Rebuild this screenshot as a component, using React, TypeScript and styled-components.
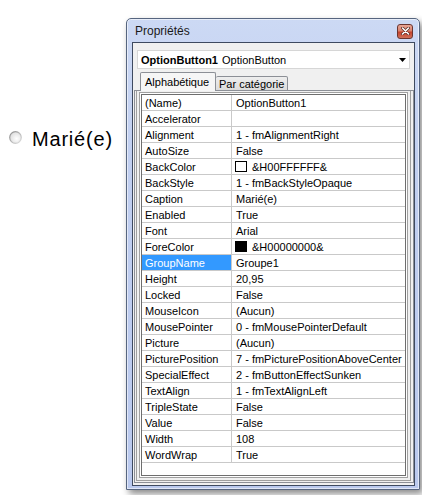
import React from "react";
import styled, { createGlobalStyle } from "styled-components";

const Global = createGlobalStyle`
  html, body { margin: 0; padding: 0; background: #ffffff; }
  body { font-family: "Liberation Sans", Arial, sans-serif; }
`;

const Page = styled.div`
  display: flex;
  align-items: flex-start;
  width: 422px;
  height: 495px;
  box-sizing: border-box;
  padding: 18px 0 0 9px;
`;

const OptionControl = styled.div`
  display: flex;
  align-items: flex-start;
  gap: 10px;
  width: 117px;
  margin-top: 110px;
`;

const RadioIcon = styled.svg`
  flex: none;
  margin-top: 3px;
`;

const OptionLabel = styled.span`
  font-family: "Liberation Sans", Arial, sans-serif;
  font-size: 20px;
  line-height: 23px;
  letter-spacing: 0.8px;
  color: #000;
  white-space: nowrap;
`;

const Window = styled.div`
  width: 294px;
  height: 472px;
  box-sizing: border-box;
  display: flex;
  flex-direction: column;
  border: 1px solid #56657f;
  border-radius: 5px 5px 0 0;
  padding: 0 4px 3px 5px;
  background: linear-gradient(180deg, #ccd9f4 0%, #c1cff0 30%, #bac9ee 100%);
  box-shadow: inset 0 0 0 1px rgba(255, 255, 255, 0.55), 3px 4px 7px rgba(0, 0, 0, 0.45);
`;

const TitleBar = styled.div`
  height: 23px;
  flex: none;
  display: flex;
  align-items: center;
  justify-content: space-between;
  padding-left: 3px;
`;

const TitleText = styled.span`
  font-family: "Liberation Sans", Arial, sans-serif;
  font-size: 12px;
  color: #1a1a1a;
`;

const CloseButton = styled.div`
  width: 16px;
  height: 15px;
  box-sizing: border-box;
  margin-right: 2px;
  margin-top: 1px;
  border: 1px solid #6b3530;
  border-radius: 3px;
  background: linear-gradient(180deg, #e7a595 0%, #d9826d 45%, #c5422b 55%, #d0705a 100%);
  display: flex;
  align-items: center;
  justify-content: center;
`;

const Client = styled.div`
  flex: 1;
  display: flex;
  flex-direction: column;
  min-height: 0;
  border: 1px solid #3e4a60;
  background: #f0f0f0;
  padding: 7px 0 2px 0;
`;

const ObjectSelect = styled.div`
  height: 19px;
  flex: none;
  box-sizing: border-box;
  margin: 0 4px;
  border: 1px solid #d6d6d6;
  background: #ffffff;
  display: flex;
  align-items: center;
  padding-left: 3px;
  font-family: "Liberation Sans", Arial, sans-serif;
  font-size: 11px;
  color: #000;
`;

const ObjName = styled.b`
  font-weight: bold;
  margin-right: 4px;
`;

const ObjType = styled.span`
  flex: 1;
`;

const Arrow = styled.svg`
  margin-right: 3px;
`;

const TabStrip = styled.div`
  flex: none;
  height: 19px;
  margin-top: 3px;
  margin-bottom: -1px;
  padding-left: 7px;
  display: flex;
  align-items: flex-end;
  position: relative;
  z-index: 1;
`;

const Tab = styled.div<{ $active?: boolean }>`
  box-sizing: border-box;
  height: ${(p) => (p.$active ? "19px" : "15px")};
  width: ${(p) => (p.$active ? "76px" : "72px")};
  border: 1px solid #8c8f96;
  border-left: ${(p) => (p.$active ? "1px solid #8c8f96" : "none")};
  border-bottom: ${(p) => (p.$active ? "none" : "1px solid #8c8f96")};
  border-radius: 2px 2px 0 0;
  background: ${(p) => (p.$active ? "#f6f6f6" : "linear-gradient(180deg, #eeeeee 0%, #dcdcdc 100%)")};
  padding-left: ${(p) => (p.$active ? "4px" : "3px")};
  line-height: ${(p) => (p.$active ? "18px" : "14px")};
  font-family: "Liberation Sans", Arial, sans-serif;
  font-size: 11px;
  color: #000;
  white-space: nowrap;
`;

const Panel = styled.div`
  flex: 1;
  min-height: 0;
  margin-left: 1px;
  border: 1px solid #8c8f96;
  background: #f0f0f0;
  display: flex;
  flex-direction: column;
  overflow: hidden;
`;

const Grid = styled.div`
  flex: 1;
  min-height: 0;
  margin: 3px 7px 6px 6px;
  border: 1px solid #6e6e6e;
  background: #ffffff;
  box-shadow: 0 0 0 1px #ffffff, 0 0 0 2px #a0a0a0, 0 0 0 4px #f0f0f0, 0 0 0 5px #a0a0a0;
  display: flex;
  flex-direction: column;
`;

const Row = styled.div`
  display: flex;
  height: 16px;
  box-sizing: border-box;
  border-bottom: 1px solid #c9c9c9;
  font-family: "Liberation Sans", Arial, sans-serif;
  font-size: 11px;
  color: #000;
`;

const NameCell = styled.div<{ $selected?: boolean }>`
  width: 90px;
  flex: none;
  box-sizing: border-box;
  border-right: 1px solid #c9c9c9;
  padding: 1px 0 0 3px;
  line-height: 14px;
  white-space: nowrap;
  overflow: hidden;
  background: ${(p) => (p.$selected ? "#3399ff" : "transparent")};
  color: ${(p) => (p.$selected ? "#ffffff" : "#000000")};
`;

const ValueCell = styled.div`
  flex: 1;
  display: flex;
  align-items: center;
  padding: 1px 0 0 4px;
  line-height: 14px;
  white-space: nowrap;
  overflow: hidden;
`;

const Swatch = styled.span<{ $color: string }>`
  width: 12px;
  height: 11px;
  box-sizing: border-box;
  margin: -1px 5px 0 -1px;
  border: 1px solid #000;
  background: ${(p) => p.$color};
  flex: none;
`;

type Prop = { name: string; value: string; swatch?: string; selected?: boolean };

const props: Prop[] = [
  { name: "(Name)", value: "OptionButton1" },
  { name: "Accelerator", value: "" },
  { name: "Alignment", value: "1 - fmAlignmentRight" },
  { name: "AutoSize", value: "False" },
  { name: "BackColor", value: "&H00FFFFFF&", swatch: "#ffffff" },
  { name: "BackStyle", value: "1 - fmBackStyleOpaque" },
  { name: "Caption", value: "Marié(e)" },
  { name: "Enabled", value: "True" },
  { name: "Font", value: "Arial" },
  { name: "ForeColor", value: "&H00000000&", swatch: "#000000" },
  { name: "GroupName", value: "Groupe1", selected: true },
  { name: "Height", value: "20,95" },
  { name: "Locked", value: "False" },
  { name: "MouseIcon", value: "(Aucun)" },
  { name: "MousePointer", value: "0 - fmMousePointerDefault" },
  { name: "Picture", value: "(Aucun)" },
  { name: "PicturePosition", value: "7 - fmPicturePositionAboveCenter" },
  { name: "SpecialEffect", value: "2 - fmButtonEffectSunken" },
  { name: "TextAlign", value: "1 - fmTextAlignLeft" },
  { name: "TripleState", value: "False" },
  { name: "Value", value: "False" },
  { name: "Width", value: "108" },
  { name: "WordWrap", value: "True" },
];

export default function App() {
  return (
    <>
      <Global />
      <Page>
        <OptionControl>
          <RadioIcon width="13" height="13" viewBox="0 0 13 13">
            <defs>
              <linearGradient id="ring" x1="0" y1="0" x2="1" y2="1">
                <stop offset="0" stopColor="#8a8a8a" />
                <stop offset="1" stopColor="#e2e2e2" />
              </linearGradient>
              <radialGradient id="fill" cx="0.6" cy="0.6" r="0.6">
                <stop offset="0" stopColor="#ffffff" />
                <stop offset="1" stopColor="#dedede" />
              </radialGradient>
            </defs>
            <circle cx="6.5" cy="6.5" r="5.8" fill="url(#fill)" stroke="url(#ring)" strokeWidth="1.2" />
          </RadioIcon>
          <OptionLabel>Marié(e)</OptionLabel>
        </OptionControl>

        <Window>
          <TitleBar>
            <TitleText>Propriétés</TitleText>
            <CloseButton>
              <svg width="9" height="8" viewBox="0 0 9 8">
                <path d="M1.5 1 L7.5 7 M7.5 1 L1.5 7" stroke="#5a2a24" strokeWidth="3" strokeLinecap="round" />
                <path d="M1.5 1 L7.5 7 M7.5 1 L1.5 7" stroke="#ffffff" strokeWidth="1.6" strokeLinecap="round" />
              </svg>
            </CloseButton>
          </TitleBar>
          <Client>
            <ObjectSelect>
              <ObjName>OptionButton1</ObjName>
              <ObjType>OptionButton</ObjType>
              <Arrow width="7" height="4" viewBox="0 0 7 4">
                <polygon points="0,0 7,0 3.5,4" fill="#000" />
              </Arrow>
            </ObjectSelect>
            <TabStrip>
              <Tab $active>Alphabétique</Tab>
              <Tab>Par catégorie</Tab>
            </TabStrip>
            <Panel>
              <Grid>
                {props.map((p) => (
                  <Row key={p.name}>
                    <NameCell $selected={p.selected}>{p.name}</NameCell>
                    <ValueCell>
                      {p.swatch && <Swatch $color={p.swatch} />}
                      {p.value}
                    </ValueCell>
                  </Row>
                ))}
              </Grid>
            </Panel>
          </Client>
        </Window>
      </Page>
    </>
  );
}
